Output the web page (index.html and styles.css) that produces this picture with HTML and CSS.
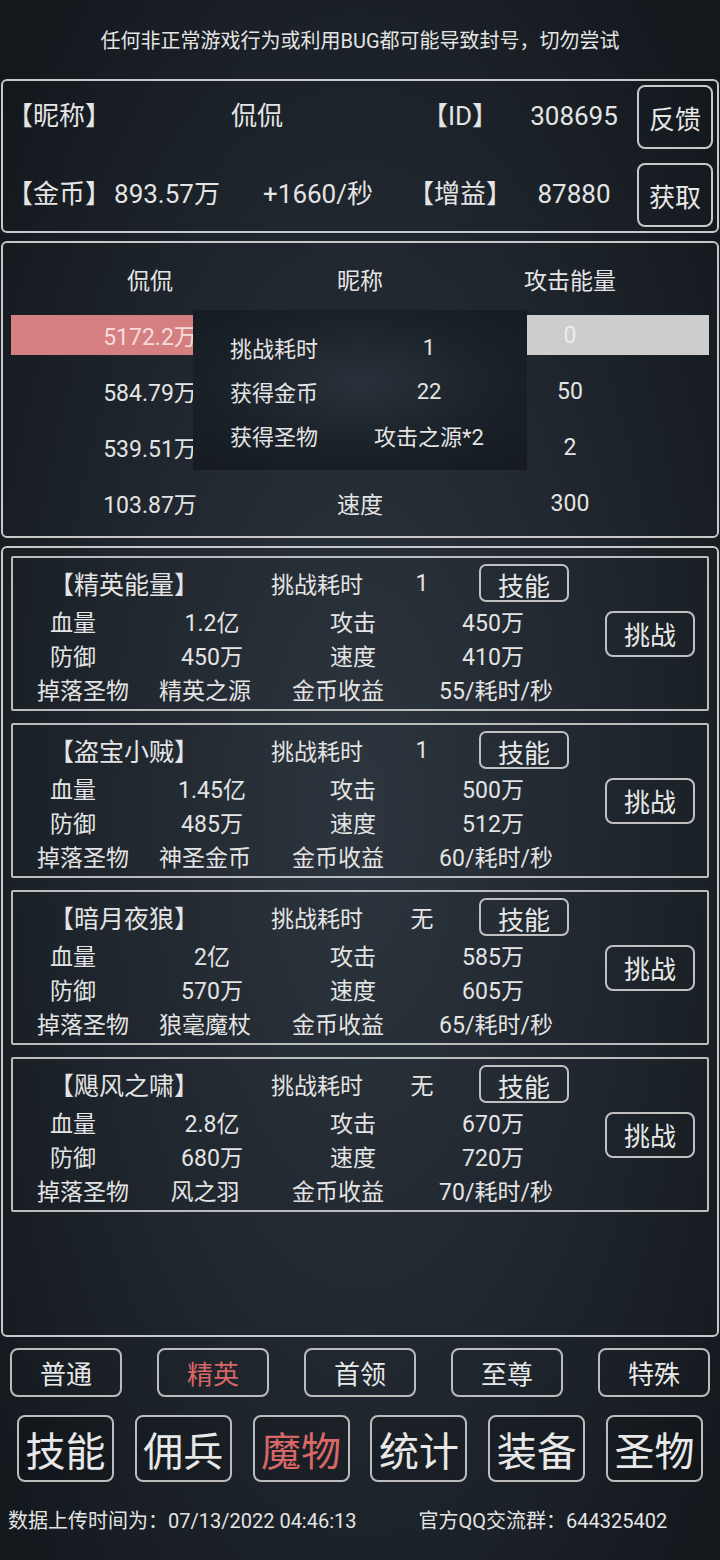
FILE: index.html
```html
<!DOCTYPE html>
<html lang="zh-CN">
<head>
  <meta charset="UTF-8" />
  <meta name="viewport" content="width=device-width, initial-scale=1.0"/>
  <title>魔物 - 精英</title>
  <link rel="stylesheet" href="styles.css">
</head>
<body>
  <div class="screen">
    <p class="notice">任何非正常游戏行为或利用BUG都可能导致封号，切勿尝试</p>

    <section class="panel profile">
      <span>【昵称】</span>
      <span class="nick">侃侃</span>
      <span>【ID】</span>
      <span>308695</span>
      <button class="box-btn">反馈</button>

      <span>【金币】</span>
      <span>893.57万</span>
      <span>+1660/秒</span>
      <span>【增益】</span>
      <span>87880</span>
      <button class="box-btn">获取</button>
    </section>

    <section class="panel battle">
      <div class="battle-row">
        <span>侃侃</span><span>昵称</span><span>攻击能量</span>
      </div>
      <div class="battle-row hp-bar">
        <span class="hp-text">5172.2万</span><span></span><span class="energy-text">0</span>
      </div>
      <div class="battle-row">
        <span>584.79万</span><span></span><span>50</span>
      </div>
      <div class="battle-row">
        <span>539.51万</span><span></span><span>2</span>
      </div>
      <div class="battle-row">
        <span>103.87万</span><span>速度</span><span>300</span>
      </div>

      <div class="result-popup">
        <span>挑战耗时</span><span class="val">1</span>
        <span>获得金币</span><span class="val">22</span>
        <span>获得圣物</span><span class="val">攻击之源*2</span>
      </div>
    </section>

    <section class="panel monsters">
      <div class="card">
        <div class="card-info">
          <div class="card-head">
            <span class="title">【精英能量】</span>
            <span class="time-label">挑战耗时</span>
            <span class="time-val">1</span>
            <button class="skill-btn">技能</button>
          </div>
          <div class="stat-row">
            <span>血量</span><span>1.2亿</span><span>攻击</span><span>450万</span>
          </div>
          <div class="stat-row">
            <span>防御</span><span>450万</span><span>速度</span><span>410万</span>
          </div>
          <div class="stat-row drop">
            <span>掉落圣物</span><span>精英之源</span><span>金币收益</span><span>55/耗时/秒</span>
          </div>
        </div>
        <button class="challenge-btn">挑战</button>
      </div>

      <div class="card">
        <div class="card-info">
          <div class="card-head">
            <span class="title">【盗宝小贼】</span>
            <span class="time-label">挑战耗时</span>
            <span class="time-val">1</span>
            <button class="skill-btn">技能</button>
          </div>
          <div class="stat-row">
            <span>血量</span><span>1.45亿</span><span>攻击</span><span>500万</span>
          </div>
          <div class="stat-row">
            <span>防御</span><span>485万</span><span>速度</span><span>512万</span>
          </div>
          <div class="stat-row drop">
            <span>掉落圣物</span><span>神圣金币</span><span>金币收益</span><span>60/耗时/秒</span>
          </div>
        </div>
        <button class="challenge-btn">挑战</button>
      </div>

      <div class="card">
        <div class="card-info">
          <div class="card-head">
            <span class="title">【暗月夜狼】</span>
            <span class="time-label">挑战耗时</span>
            <span class="time-val">无</span>
            <button class="skill-btn">技能</button>
          </div>
          <div class="stat-row">
            <span>血量</span><span>2亿</span><span>攻击</span><span>585万</span>
          </div>
          <div class="stat-row">
            <span>防御</span><span>570万</span><span>速度</span><span>605万</span>
          </div>
          <div class="stat-row drop">
            <span>掉落圣物</span><span>狼毫魔杖</span><span>金币收益</span><span>65/耗时/秒</span>
          </div>
        </div>
        <button class="challenge-btn">挑战</button>
      </div>

      <div class="card">
        <div class="card-info">
          <div class="card-head">
            <span class="title">【飓风之啸】</span>
            <span class="time-label">挑战耗时</span>
            <span class="time-val">无</span>
            <button class="skill-btn">技能</button>
          </div>
          <div class="stat-row">
            <span>血量</span><span>2.8亿</span><span>攻击</span><span>670万</span>
          </div>
          <div class="stat-row">
            <span>防御</span><span>680万</span><span>速度</span><span>720万</span>
          </div>
          <div class="stat-row drop">
            <span>掉落圣物</span><span>风之羽</span><span>金币收益</span><span>70/耗时/秒</span>
          </div>
        </div>
        <button class="challenge-btn">挑战</button>
      </div>
    </section>

    <nav class="tabs">
      <button class="tab">普通</button>
      <button class="tab active">精英</button>
      <button class="tab">首领</button>
      <button class="tab">至尊</button>
      <button class="tab">特殊</button>
    </nav>

    <nav class="menu">
      <button class="menu-btn">技能</button>
      <button class="menu-btn">佣兵</button>
      <button class="menu-btn active">魔物</button>
      <button class="menu-btn">统计</button>
      <button class="menu-btn">装备</button>
      <button class="menu-btn">圣物</button>
    </nav>

    <footer class="footer">
      <span>数据上传时间为：07/13/2022 04:46:13</span>
      <span>官方QQ交流群：644325402</span>
    </footer>
  </div>
</body>
</html>
```

FILE: styles.css
```css
* {
  box-sizing: border-box;
}

body {
  margin: 0;
  font-family: Roboto, 'Noto Sans CJK SC', sans-serif;
  color: #e4e4e4;
  background: radial-gradient(ellipse 65% 70% at 50% 52%, #2d353e 0%, #1f262d 55%, #13181d 100%);
  min-height: 1560px;
}

button {
  font-family: inherit;
  color: #e8e8e8;
  background: transparent;
  padding: 0;
  cursor: pointer;
}

.screen {
  width: 720px;
  height: 1560px;
}

.notice {
  margin: 0;
  height: 79px;
  display: flex;
  align-items: center;
  justify-content: center;
  font-size: 20px;
}

.panel {
  margin: 0 1px;
  border: 2px solid #c8c8c8;
  border-radius: 6px;
}

/* top player info */
.profile {
  height: 154px;
  padding: 4px;
  display: grid;
  grid-template-columns: 94px 132px 170px 114px 114px 1fr;
  grid-template-rows: 64px 64px;
  row-gap: 14px;
  align-items: center;
  justify-items: center;
  font-size: 26px;
  line-height: 30px;
}

.profile > span {
  margin-top: -3px;
}

.profile .nick {
  grid-column: span 2;
  padding-left: 10px;
}

.box-btn {
  justify-self: end;
  width: 76px;
  height: 64px;
  border: 2px solid #c8c8c8;
  border-radius: 8px;
  font-size: 26px;
}

/* battle summary */
.battle {
  position: relative;
  height: 297px;
  margin-top: 8px;
  padding: 16px 0 13px;
}

.battle-row {
  display: grid;
  grid-template-columns: repeat(3, 210px);
  justify-content: center;
  align-items: center;
  justify-items: center;
  height: 40px;
  margin-bottom: 16px;
  font-size: 23px;
}

.battle-row:last-of-type {
  margin-bottom: 0;
}

.hp-bar {
  margin-left: 8px;
  margin-right: 8px;
  background: linear-gradient(to right, #d67f80 50%, #cdcdcd 50%);
}

.hp-text {
  color: #f4dcdc;
}

.energy-text {
  color: #ececec;
}

.result-popup {
  position: absolute;
  left: 190px;
  top: 67px;
  width: 334px;
  height: 160px;
  padding: 15px 0 0 37px;
  display: grid;
  grid-template-columns: 123px 152px;
  grid-auto-rows: 44px;
  align-items: center;
  font-size: 22px;
  background: radial-gradient(ellipse 70% 70% at 50% 45%, #29313a 0%, #1a2128 60%, #151b21 100%);
}

.result-popup .val {
  text-align: center;
}

/* monster list */
.monsters {
  height: 791px;
  margin-top: 8px;
  padding: 8px;
  display: flex;
  flex-direction: column;
  gap: 12px;
}

.card {
  height: 155px;
  border: 2px solid #bcbcbc;
  border-radius: 2px;
  display: flex;
}

.card-info {
  flex: 1;
  padding-top: 6px;
  font-size: 23px;
}

.card-head {
  display: flex;
  align-items: center;
  height: 38px;
}

.card-head .title {
  width: 222px;
  text-align: center;
  font-size: 25px;
}

.card-head .time-label {
  width: 164px;
  text-align: center;
}

.card-head .time-val {
  width: 46px;
  text-align: center;
}

.skill-btn {
  margin-left: 34px;
  width: 90px;
  height: 38px;
  border: 2px solid #c0c0c0;
  border-radius: 7px;
  font-size: 26px;
}

.stat-row {
  display: grid;
  grid-template-columns: 120px 158px 124px 156px;
  justify-items: center;
  align-items: center;
  height: 34px;
}

.card-head + .stat-row {
  margin-top: 2px;
}

.stat-row.drop {
  grid-template-columns: 140px 104px 162px 154px;
}

.challenge-btn {
  align-self: center;
  width: 90px;
  height: 46px;
  margin-right: 12px;
  border: 2px solid #c0c0c0;
  border-radius: 8px;
  font-size: 26px;
}

/* bottom navigation */
.tabs {
  display: flex;
  justify-content: space-between;
  padding: 0 10px;
  margin-top: 11px;
}

.tab {
  width: 112px;
  height: 49px;
  border: 2px solid #bcbcbc;
  border-radius: 8px;
  font-size: 26px;
}

.menu {
  display: flex;
  justify-content: space-between;
  padding: 0 17px;
  margin-top: 18px;
}

.menu-btn {
  width: 97px;
  height: 67px;
  border: 2px solid #bcbcbc;
  border-radius: 8px;
  font-size: 40px;
  background: rgba(0, 0, 0, 0.12);
}

.active {
  color: #d86767;
}

.footer {
  display: flex;
  gap: 62px;
  padding: 27px 0 0 8px;
  font-size: 20px;
  line-height: 24px;
}
```
